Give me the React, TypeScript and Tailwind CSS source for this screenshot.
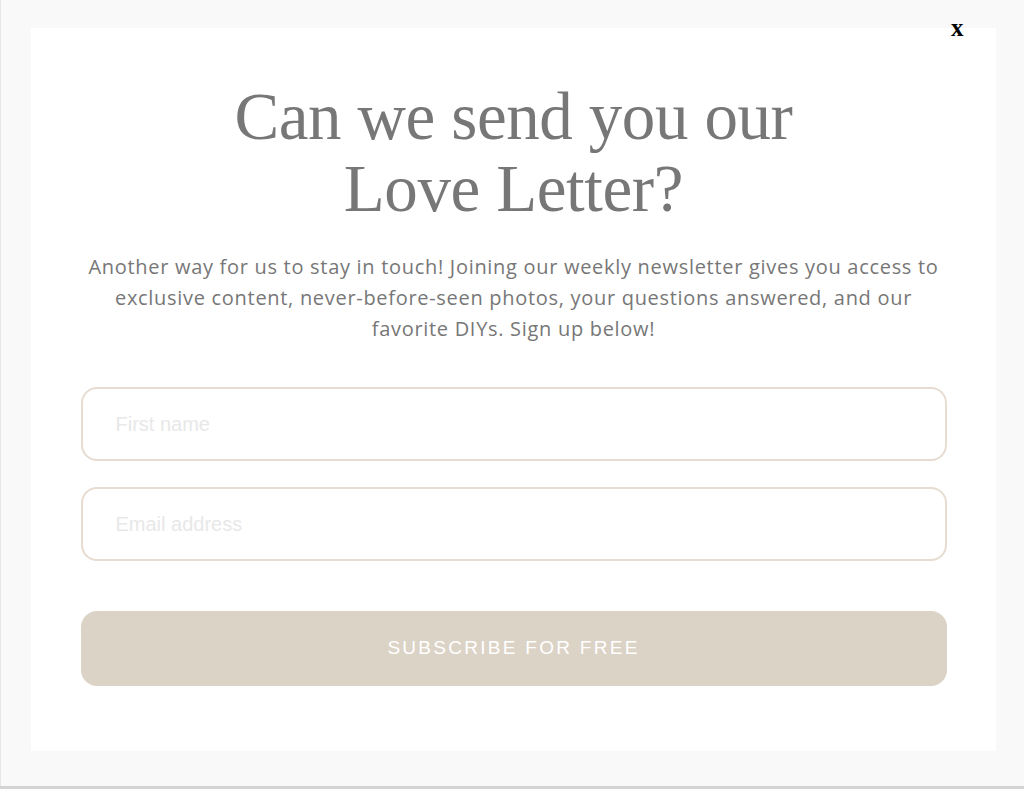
export default function App() {
  return (
    <div className="relative flex h-[789px] w-[1024px] flex-col overflow-hidden bg-[#f9f9f9]">
      {/* ─── Overlay + modal ─── */}
      <div className="flex flex-1 border-l border-[#e6e6e6] pt-[28px] pl-[30px] pr-[28px] pb-[35px]">
        <div className="flex w-full flex-col items-center bg-white pt-[52px]">
          <h1 className="text-center font-['Liberation_Serif',serif] text-[67px] leading-[72px] tracking-[-0.006em] text-[#777777]">
            Can we send you our
            <br />
            Love Letter?
          </h1>
          <p className="mt-[27px] w-[900px] text-center font-['Open_Sans',sans-serif] text-[20px] leading-[31px] tracking-[0.035em] text-[#777777]">
            Another way for us to stay in touch! Joining our weekly newsletter gives you access to
            <br />
            exclusive content, never-before-seen photos, your questions answered, and our
            <br />
            favorite DIYs. Sign up below!
          </p>

          {/* ─── Form ─── */}
          <form className="mt-[43px] flex w-[866px] flex-col">
            <input
              placeholder="First name"
              className="h-[74px] rounded-[16px] border-2 border-[#e6dccf] px-[33px] font-['Liberation_Sans',sans-serif] text-[20px] placeholder:text-[#e8e8e8]"
            />
            <input
              placeholder="Email address"
              className="mt-[26px] h-[74px] rounded-[16px] border-2 border-[#e6dccf] px-[33px] font-['Liberation_Sans',sans-serif] text-[20px] placeholder:text-[#e8e8e8]"
            />
            <button
              type="button"
              className="mt-[50px] h-[75px] rounded-[16px] bg-[#dcd3c7] font-['Liberation_Sans',sans-serif] text-[19px] tracking-[0.12em] text-white"
            >
              SUBSCRIBE FOR FREE
            </button>
          </form>
        </div>
      </div>

      <div className="h-[3px] bg-[#d4d4d4]" />

      {/* close */}
      <span className="absolute left-[951px] top-[15px] font-['Liberation_Serif',serif] text-[25px] font-bold leading-none text-black">
        x
      </span>
    </div>
  );
}
